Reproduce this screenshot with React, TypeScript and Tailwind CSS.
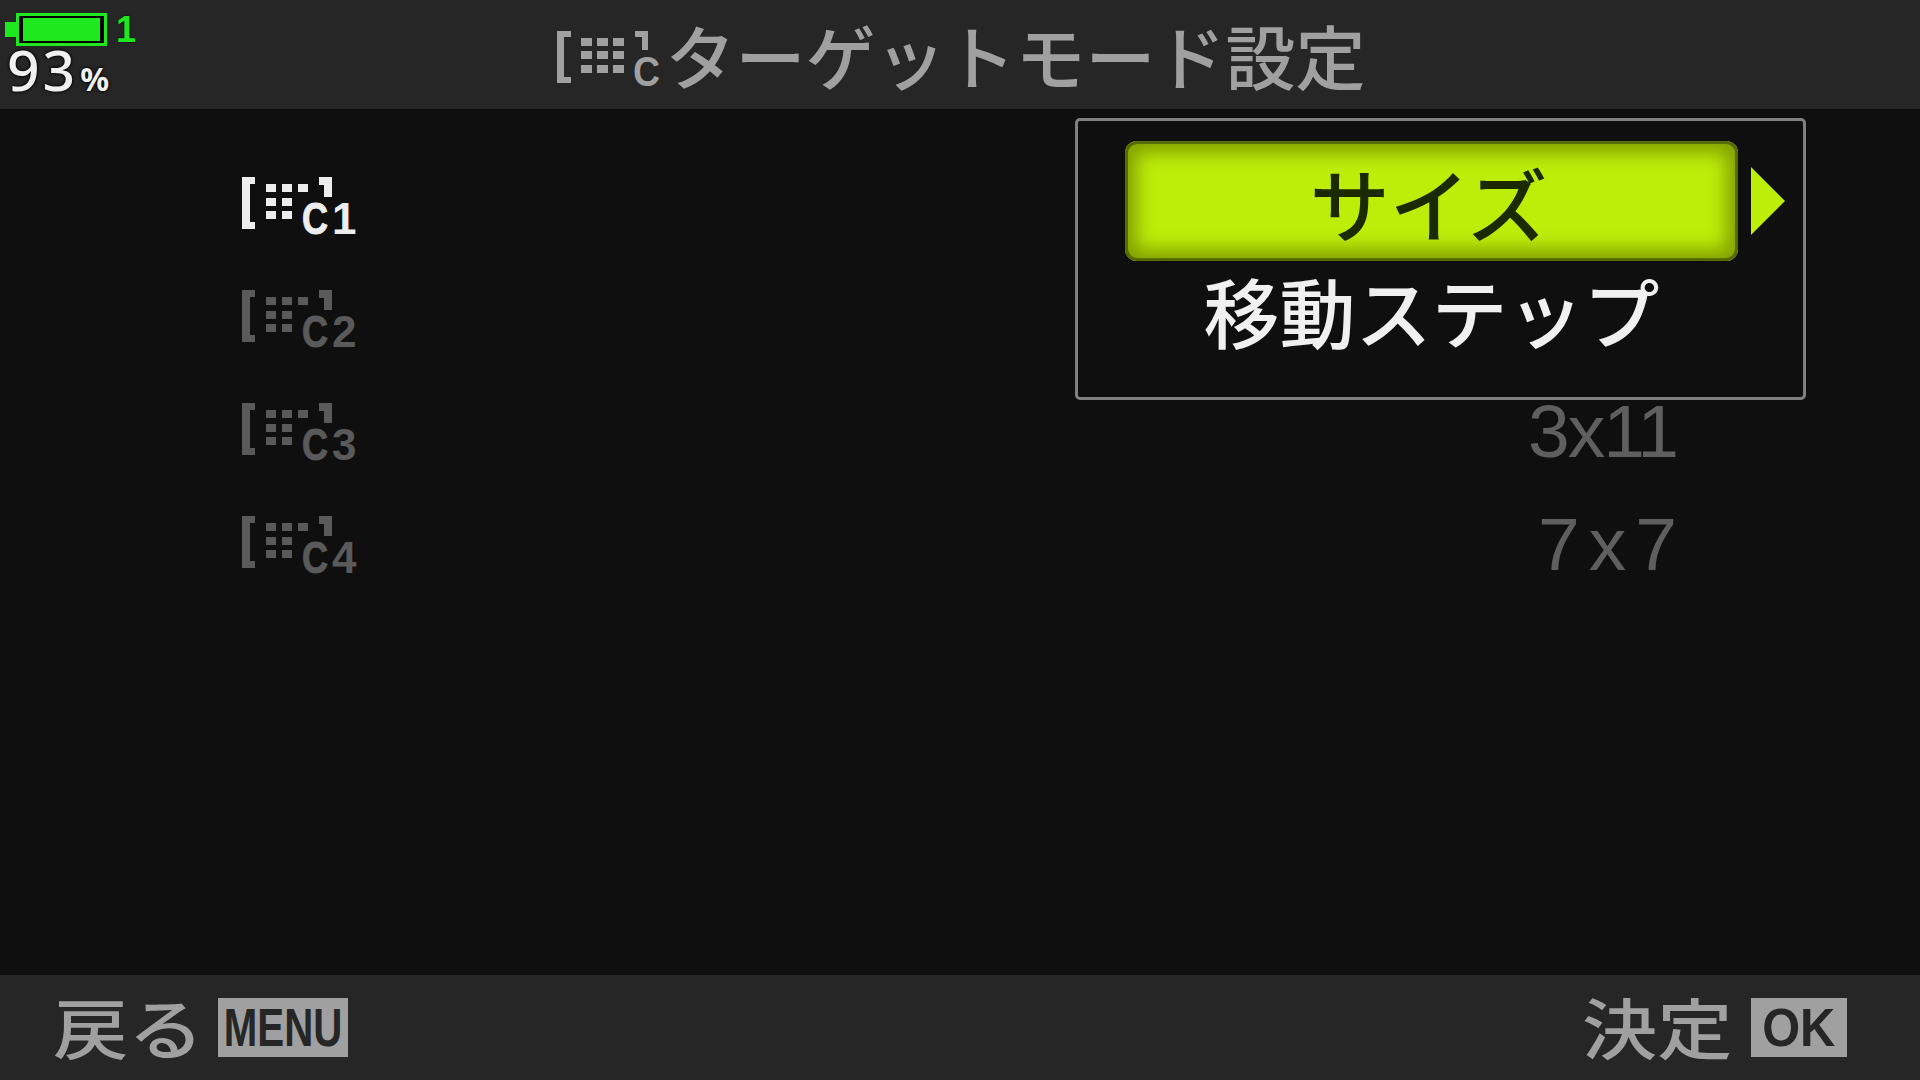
const CJK = "font-['Noto_Sans_CJK_JP','Noto_Sans',sans-serif]";

const ROWS = [
  { digit: '1', color: '#ededed', value: '', spacing: '' },
  { digit: '2', color: '#5a5a5a', value: '', spacing: '' },
  { digit: '3', color: '#5a5a5a', value: '3x11', spacing: 'tracking-[-2px]' },
  { digit: '4', color: '#5a5a5a', value: '7x7', spacing: 'mr-[-9px] tracking-[9px]' },
];

// AF target bracket with the dot grid, custom slot number beside the C
function TargetIcon({ color, digit }: { color: string; digit: string }) {
  const xs = [24, 40, 56];
  const ys = [7, 21, 34];
  return (
    <svg width="120" height="76" viewBox="0 -9 120 76" fill={color}>
      <path d="M0 0h13v7H8v38h5v7H0z" />
      <path d="M77 0h13v20h-8V8h-5z" />
      {ys.map((y, row) =>
        xs.map((x, col) =>
          row > 0 && col === 2 ? null : <rect key={`${x}-${y}`} x={x} y={y} width="10" height="8" />,
        ),
      )}
      <text
        x="60"
        y="57"
        fontSize="44"
        fontWeight="700"
        fontFamily="'Liberation Sans', sans-serif"
        textLength="26"
        lengthAdjust="spacingAndGlyphs"
        stroke={color}
        strokeWidth="1"
      >
        C
      </text>
      <text
        x="90"
        y="57"
        fontSize="44"
        fontWeight="700"
        fontFamily="'Liberation Sans', sans-serif"
      >
        {digit}
      </text>
    </svg>
  );
}

function TitleIcon() {
  const xs = [24, 40, 56];
  const ys = [7, 20, 34];
  return (
    <svg width="106" height="72" viewBox="0 -8 106 72" fill="#a0a0a0">
      <path d="M0 0h14v6H7v40h7v6H0z" />
      <path d="M78 0h13v19h-6V6h-7z" />
      {ys.map((y) => xs.map((x) => <rect key={`${x}-${y}`} x={x} y={y} width="11" height="8" />))}
      <text
        x="76"
        y="55"
        fontSize="42"
        fontWeight="700"
        fontFamily="'Liberation Sans', sans-serif"
        textLength="27"
        lengthAdjust="spacingAndGlyphs"
      >
        C
      </text>
    </svg>
  );
}

function Battery() {
  return (
    <div className="flex flex-col pt-[13px] pl-[5px]">
      <div className="flex items-start">
        <div className="mt-[9px] h-[15px] w-[11px] bg-[#1fe81f]" />
        <div className="h-[33px] w-[91px] border-[3px] border-[#1fe81f] bg-black px-[4px] py-[2px]">
          <div className="h-full w-full bg-[#1fe81f]" />
        </div>
        <span className="ml-[9px] font-['Liberation_Sans',sans-serif] text-[36px] leading-[33px] font-bold text-[#1fe81f] [text-shadow:0_0_2px_#000]">
          1
        </span>
      </div>
      <div className="ml-[2px] flex items-baseline font-['Noto_Sans',sans-serif] text-[#f0f0f0] [text-shadow:0_0_3px_#000,0_0_3px_#000]">
        <span className="text-[57px] leading-[46px] font-medium tracking-[3px]">93</span>
        <span className="ml-[2px] text-[32px] leading-[46px] font-bold">%</span>
      </div>
    </div>
  );
}

export default function App() {
  return (
    <div className={`flex h-screen w-screen flex-col overflow-hidden bg-[#0f0f0f] ${CJK}`}>
      {/* Header */}
      <header className="grid h-[109px] shrink-0 grid-cols-[1fr_auto_1fr] items-start bg-[#262626]">
        <Battery />
        <div className="flex h-full items-center gap-[3px] pt-[1px] text-[#a0a0a0]">
          <div className="pt-[8px] pl-[2px]">
            <TitleIcon />
          </div>
          <h1 className="text-[70px] leading-none font-medium">ターゲットモード設定</h1>
        </div>
        <div />
      </header>

      {/* List with the popup over it */}
      <main className="relative flex-1">
        <div className="flex flex-col pt-[40px] pr-[243px] pl-[242px]">
          {ROWS.map((row) => (
            <div key={row.digit} className="flex h-[113px] items-center justify-between">
              <TargetIcon color={row.color} digit={row.digit} />
              {row.value && (
                <span className={`font-['Liberation_Sans',sans-serif] text-[75px] leading-none text-[#5f5f5f] ${row.spacing}`}>
                  {row.value}
                </span>
              )}
            </div>
          ))}
        </div>

        <div className="absolute top-[9px] left-[1075px] flex h-[282px] w-[731px] flex-col rounded-[5px] border-[3px] border-[#808080] bg-[#0f0f0f] pt-[20px] pl-[47px]">
          <div className="flex items-center">
            <div className="flex h-[120px] w-[613px] items-center justify-center rounded-[12px] bg-[#bcee0a] pr-[6px] text-[80px] leading-none font-medium text-[#1c2a00] shadow-[inset_0_0_0_3px_#566b00,inset_0_0_18px_12px_#83a200]">
              サイズ
            </div>
            <svg width="34" height="68" viewBox="0 0 34 68" className="ml-[13px]">
              <path d="M0 0 34 34 0 68z" fill="#bcee0a" />
            </svg>
          </div>
          <div className="flex h-[96px] w-[613px] items-center justify-center pt-[2px] text-[76px] leading-none font-medium text-[#f0f0f0]">
            移動ステップ
          </div>
        </div>
      </main>

      {/* Footer */}
      <footer className="flex h-[105px] shrink-0 items-center justify-between bg-[#262626] pr-[73px] pl-[53px] text-[#a0a0a0]">
        <div className="flex items-center gap-[15px]">
          <span className="mt-[-6px] w-[150px] origin-left scale-x-[1.14] text-[66px] leading-none font-medium">戻る</span>
          <span className="flex h-[59px] w-[130px] items-center justify-center bg-[#a0a0a0] font-['Liberation_Sans',sans-serif] text-[53px] leading-none font-bold text-[#262626]">
            <span className="scale-x-[0.76]">MENU</span>
          </span>
        </div>
        <div className="flex items-center gap-[19px]">
          <span className="mt-[-6px] w-[150px] origin-left scale-x-[1.14] text-[66px] leading-none font-medium">決定</span>
          <span className="flex h-[59px] w-[96px] items-center justify-center bg-[#a0a0a0] font-['Liberation_Sans',sans-serif] text-[53px] leading-none font-bold text-[#262626]">
            <span className="scale-x-[0.92]">OK</span>
          </span>
        </div>
      </footer>
    </div>
  );
}
